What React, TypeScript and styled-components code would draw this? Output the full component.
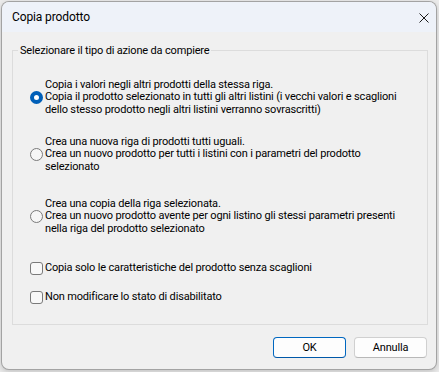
import React from "react";
import styled, { createGlobalStyle } from "styled-components";

const GlobalStyle = createGlobalStyle`
  html, body {
    margin: 0;
    padding: 0;
    background: #ececec;
    font-family: Roboto, "Noto Sans", sans-serif;
  }
`;

const Page = styled.div`
  padding: 1px 0 0 1px;
  width: 439px;
  height: 372px;
  box-sizing: border-box;
`;

const Window = styled.div`
  width: 436px;
  height: 369px;
  box-sizing: border-box;
  border: 1px solid rgba(0, 0, 0, 0.32);
  border-radius: 8px;
  overflow: hidden;
  background: #f0f0f0;
  display: flex;
  flex-direction: column;
  box-shadow: 0 2px 6px rgba(0, 0, 0, 0.18);
`;

const TitleBar = styled.div`
  height: 30px;
  flex: none;
  display: flex;
  align-items: center;
  justify-content: space-between;
  padding: 0 7px 0 10px;
  background: #eef2f9;
  font-size: 12px;
  letter-spacing: -0.12px;
  color: #000;
`;

const CloseButton = styled.div`
  width: 10px;
  height: 10px;
  display: flex;
  margin-top: 1px;
`;

const Body = styled.div`
  flex: 1;
  display: flex;
  flex-direction: column;
  padding: 12px 8px 0 10px;
  font-size: 11px;
  line-height: 12.5px;
  letter-spacing: -0.17px;
  color: #000;
`;

const Group = styled.fieldset`
  margin: 0;
  padding: 0 0 20px 0;
  width: 416px;
  box-sizing: border-box;
  border: 1px solid #dcdcdc;
  min-width: 0;
`;

const Legend = styled.legend`
  margin-left: 5px;
  padding: 0 2px;
  font-size: 11px;
  line-height: 13px;
`;

const OptionRow = styled.label<{ $top: number }>`
  display: grid;
  grid-template-columns: 13px 1fr;
  column-gap: 2px;
  align-items: center;
  margin: ${(p) => p.$top}px 0 0 17px;
`;

const Lines = styled.div`
  display: flex;
  flex-direction: column;
  white-space: nowrap;
`;

const Line = styled.span`
  display: block;
  height: 12.5px;
`;

const Radio = styled.span<{ $checked?: boolean }>`
  width: 13px;
  height: 13px;
  box-sizing: border-box;
  border-radius: 50%;
  border: ${(p) => (p.$checked ? "4px solid #005fb8" : "1px solid #7a7a7a")};
  background: ${(p) => (p.$checked ? "#ffffff" : "#f6f6f6")};
`;

const Check = styled.span`
  width: 13px;
  height: 13px;
  box-sizing: border-box;
  border-radius: 3px;
  border: 1px solid #7a7a7a;
  background: #f8f8f8;
`;

const Footer = styled.div`
  display: flex;
  justify-content: flex-end;
  gap: 8px;
  padding: 12px 1px 0 0;
`;

const Button = styled.div<{ $primary?: boolean }>`
  width: 73px;
  height: 21px;
  box-sizing: border-box;
  display: flex;
  align-items: center;
  justify-content: center;
  border-radius: 4px;
  background: #fdfdfd;
  border: 1px solid ${(p) => (p.$primary ? "#0067c0" : "#d0d0d0")};
  border-bottom-color: ${(p) => (p.$primary ? "#0058a8" : "#b8b8b8")};
  font-size: 11px;
  line-height: 13px;
  color: #000;
`;

type Opt = { lines: string[]; top: number; checked?: boolean };

const radioOptions: Opt[] = [
  {
    top: 21.5,
    checked: true,
    lines: [
      "Copia i valori negli altri prodotti della stessa riga.",
      "Copia il prodotto selezionato in tutti gli altri listini (i vecchi valori e scaglioni",
      "dello stesso prodotto negli altri listini verranno sovrascritti)",
    ],
  },
  {
    top: 19.5,
    lines: [
      "Crea una nuova riga di prodotti tutti uguali.",
      "Crea un nuovo prodotto per tutti i listini con i parametri del prodotto",
      "selezionato",
    ],
  },
  {
    top: 24.5,
    lines: [
      "Crea una copia della riga selezionata.",
      "Crea un nuovo prodotto avente per ogni listino gli stessi parametri presenti",
      "nella riga del prodotto selezionato",
    ],
  },
];

const checkOptions = [
  { top: 27, text: "Copia solo le caratteristiche del prodotto senza scaglioni" },
  { top: 15.5, text: "Non modificare lo stato di disabilitato" },
];

export default function App() {
  return (
    <Page>
      <GlobalStyle />
      <Window>
        <TitleBar>
          <span>Copia prodotto</span>
          <CloseButton>
            <svg width="10" height="10" viewBox="0 0 10 10">
              <path d="M0.5 0.5 L9.5 9.5 M9.5 0.5 L0.5 9.5" stroke="#1a1a1a" strokeWidth="1" fill="none" />
            </svg>
          </CloseButton>
        </TitleBar>
        <Body>
          <Group>
            <Legend>Selezionare il tipo di azione da compiere</Legend>
            {radioOptions.map((o, i) => (
              <OptionRow key={i} $top={o.top}>
                <Radio $checked={o.checked} />
                <Lines>
                  {o.lines.map((l, j) => (
                    <Line key={j}>{l}</Line>
                  ))}
                </Lines>
              </OptionRow>
            ))}
            {checkOptions.map((c, i) => (
              <OptionRow key={"c" + i} $top={c.top}>
                <Check />
                <Lines>
                  <Line>{c.text}</Line>
                </Lines>
              </OptionRow>
            ))}
          </Group>
          <Footer>
            <Button $primary>OK</Button>
            <Button>Annulla</Button>
          </Footer>
        </Body>
      </Window>
    </Page>
  );
}
